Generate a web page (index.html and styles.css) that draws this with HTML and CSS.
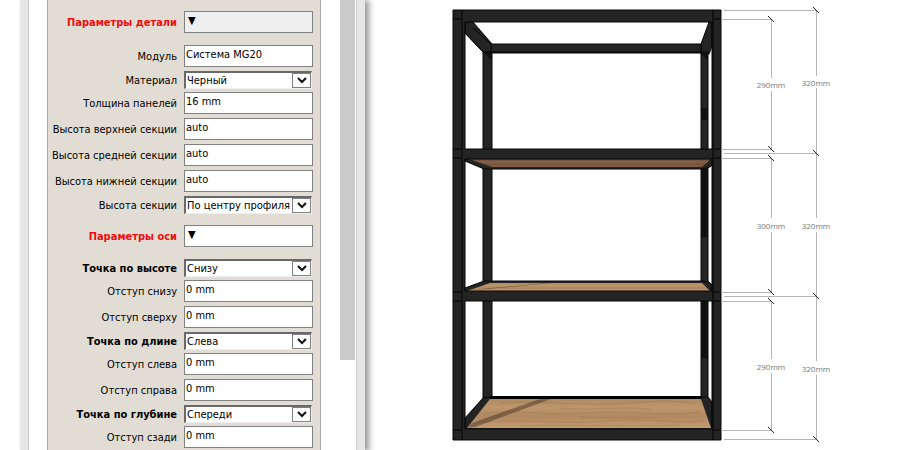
FILE: index.html
```html
<!DOCTYPE html>
<html lang="ru">
<head>
  <meta charset="UTF-8">
  <title>Система MG20</title>
  <link rel="stylesheet" href="styles.css">
</head>
<body>

  <aside class="sidebar">
    <form class="panel">
      <div class="row heading first">
        <label for="detail">Параметры детали</label>
        <button type="button" id="detail" class="toggle active">▼</button>
      </div>
      <div class="row">
        <label for="module">Модуль</label>
        <input type="text" id="module" value="Система MG20">
      </div>
      <div class="row">
        <label for="material">Материал</label>
        <div class="select">
          <select id="material"><option>Черный</option></select>
          <svg viewBox="0 0 17 13"><path d="M5 4l4 4 4-4"/></svg>
        </div>
      </div>
      <div class="row">
        <label for="thickness">Толщина панелей</label>
        <input type="text" id="thickness" value="16 mm">
      </div>
      <div class="row">
        <label for="topHeight">Высота верхней секции</label>
        <input type="text" id="topHeight" value="auto">
      </div>
      <div class="row">
        <label for="midHeight">Высота средней секции</label>
        <input type="text" id="midHeight" value="auto">
      </div>
      <div class="row">
        <label for="lowHeight">Высота нижней секции</label>
        <input type="text" id="lowHeight" value="auto">
      </div>
      <div class="row">
        <label for="section">Высота секции</label>
        <div class="select">
          <select id="section"><option>По центру профиля</option></select>
          <svg viewBox="0 0 17 13"><path d="M5 4l4 4 4-4"/></svg>
        </div>
      </div>

      <div class="row heading">
        <label for="axis">Параметры оси</label>
        <button type="button" id="axis" class="toggle">▼</button>
      </div>
      <div class="row bold">
        <label for="pointY">Точка по высоте</label>
        <div class="select">
          <select id="pointY"><option>Снизу</option></select>
          <svg viewBox="0 0 17 13"><path d="M5 4l4 4 4-4"/></svg>
        </div>
      </div>
      <div class="row">
        <label for="offBottom">Отступ снизу</label>
        <input type="text" id="offBottom" value="0 mm">
      </div>
      <div class="row">
        <label for="offTop">Отступ сверху</label>
        <input type="text" id="offTop" value="0 mm">
      </div>
      <div class="row bold">
        <label for="pointX">Точка по длине</label>
        <div class="select">
          <select id="pointX"><option>Слева</option></select>
          <svg viewBox="0 0 17 13"><path d="M5 4l4 4 4-4"/></svg>
        </div>
      </div>
      <div class="row">
        <label for="offLeft">Отступ слева</label>
        <input type="text" id="offLeft" value="0 mm">
      </div>
      <div class="row">
        <label for="offRight">Отступ справа</label>
        <input type="text" id="offRight" value="0 mm">
      </div>
      <div class="row bold">
        <label for="pointZ">Точка по глубине</label>
        <div class="select">
          <select id="pointZ"><option>Спереди</option></select>
          <svg viewBox="0 0 17 13"><path d="M5 4l4 4 4-4"/></svg>
        </div>
      </div>
      <div class="row">
        <label for="offBack">Отступ сзади</label>
        <input type="text" id="offBack" value="0 mm">
      </div>
    </form>
    <div class="scroll"><div class="thumb"></div></div>
  </aside>

  <main class="view">
    <svg class="model" viewBox="440 0 400 450">
      <defs>
        <linearGradient id="under" x1="0" y1="0" x2="0" y2="1">
          <stop offset="0" stop-color="#67493a"/>
          <stop offset="0.4" stop-color="#86634b"/>
          <stop offset="0.6" stop-color="#735340"/>
          <stop offset="1" stop-color="#836046"/>
        </linearGradient>
        <linearGradient id="wood" x1="0" y1="0" x2="0" y2="1">
          <stop offset="0" stop-color="#b08a62"/>
          <stop offset="0.3" stop-color="#bd966c"/>
          <stop offset="0.6" stop-color="#b08861"/>
          <stop offset="1" stop-color="#c29b73"/>
        </linearGradient>
      </defs>

      <!-- back frame -->
      <g class="steel">
        <rect x="483" y="50" width="9" height="348"/>
        <rect x="701" y="50" width="7" height="348"/>
        <path d="M465 22h8l19 22v9h-8L465 33z"/>
        <path d="M709 22h3v24l-3 8h-8V44z"/>
        <rect x="491" y="44" width="210" height="9"/>
        <path d="M484 53l8 8V53zM701 53l7 8V53z" class="dark"/>
      </g>
      <path class="edge" d="M473 28l18 16M465 33l18 19M483 52h226"/>
      <g class="dark">
        <rect x="702" y="108" width="6" height="12"/>
        <rect x="702" y="169" width="6" height="68"/>
        <rect x="702" y="301" width="6" height="57"/>
      </g>

      <!-- upper shelf, seen from below -->
      <path class="steel" d="M465 158v3l19 8h218l8-2 3-3v-6z"/>
      <path fill="url(#under)" d="M469 159h242l-9 8H492z"/>

      <!-- middle shelf -->
      <path class="steel" d="M465 292v-4l19-7h218l7 1 3 3v7z"/>
      <path fill="url(#wood)" d="M490 283h212l8 8H467z"/>
      <path class="shadow" d="M468 290l78-7h6l-64 6z"/>

      <!-- lower shelf -->
      <path class="steel" d="M465 418l18-20 7-1h218l4 5v28h-247z"/>
      <path d="M490 396h212v3H490z"/>
      <path fill="url(#wood)" d="M490 399h211l10 29H467z"/>
      <path class="grain" d="M500 403c50-3 80 4 130 0s50 0 65 0M484 413c40-4 60 3 100 0s80 4 115-1M560 408c30 3 60-2 90 1M478 422c60-3 90 3 130-1s60 3 96 0M580 417c20 2 50-1 75 1M520 426c40-2 90 1 160-1"/>
      <path class="shadow" d="M467 428l5-5 68-24h11l-76 28z"/>

      <!-- front frame -->
      <g class="steel">
        <path d="M453 10h268v430H453zM465 22v127h247V22zM465 159v132h247V159zM465 301v128h247V301z" fill-rule="evenodd"/>
      </g>
      <path class="edge" d="M462 10v430M713 10v430M453 19h9M713 19h8M453 149h9M713 149h8M453 158h9M713 158h8M453 292h9M713 292h8M453 301h9M713 301h8M453 430h9M713 430h8"/>

      <!-- dimensions -->
      <path class="dim" d="M724 10.500h92M721 19.500h50M721 149.500h50M724 153.500h92M721 158.500h50M721 292.500h50M724 296.500h92M721 301.500h50M721 430.500h50M724 439.500h92"/>
      <path class="dim" d="M771.500 19v59M771.500 91v58M771.500 158v60M771.500 232v60M771.500 301v58M771.500 373v58M816.500 10v66M816.500 88v130M816.500 232v129M816.500 375v65"/>
      <path class="tick" d="M768 16l6 6M768 146l6 6M768 155l6 6M768 289l6 6M768 298l6 6M768 427l6 6M813 7l6 6M813 150l6 6M813 293l6 6M813 436l6 6"/>
      <g class="size">
        <text x="771" y="88">290mm</text>
        <text x="771" y="229">300mm</text>
        <text x="771" y="370">290mm</text>
        <text x="816" y="86">320mm</text>
        <text x="816" y="229">320mm</text>
        <text x="816" y="372">320mm</text>
      </g>
    </svg>
  </main>

</body>
</html>
```
FILE: styles.css
```css
* {
  box-sizing: border-box;
}

body {
  margin: 0;
  display: flex;
  min-height: 100vh;
  background: #fff;
  color: #000;
  font-family: "DejaVu Sans Condensed", "DejaVu Sans", sans-serif;
  font-size: 11px;
}

.sidebar {
  display: flex;
  flex: 0 0 auto;
  margin-left: 20px;
  padding-left: 19px;
  border-left: 8px solid #e6e6e6;
  border-right: 8px solid #e6e6e6;
  box-shadow: inset 1px 0 #ccc, inset -1px 0 #ccc, 4px 0 6px #999;
}

.panel {
  width: 274px;
  padding: 11px 7px 0 0;
  background: #e1ddd5;
  border-left: 1px solid #aaa;
  border-right: 1px solid #aaa;
}

.row {
  display: grid;
  grid-template-columns: 1fr 129px;
  column-gap: 7px;
  align-items: center;
  margin-bottom: 3px;
}

.row label {
  text-align: right;
  white-space: nowrap;
  padding-top: 1px;
  line-height: 14px;
}

.heading {
  margin: 11px 0;
}

.first {
  margin-top: 0;
}

.heading label,
.bold label {
  font-weight: bold;
}

.heading label {
  color: #f00d0d;
}

input,
.toggle {
  width: 129px;
  height: 22px;
  margin: 0 0 1px;
  padding: 0 1px 4px;
  border: 1px solid #808080;
  border-radius: 0;
  background: #fff;
  color: #000;
  font: inherit;
}

.toggle {
  padding-left: 3px;
  text-align: left;
}

.active {
  background: #efefef;
}

.select {
  position: relative;
  width: 128px;
  height: 18px;
}

select {
  appearance: none;
  display: block;
  width: 100%;
  height: 18px;
  padding: 0 20px 0 1px;
  border: 2px solid #696969;
  border-right-color: #eee;
  border-bottom-color: #eee;
  border-width: 2px 1px 1px 2px;
  border-radius: 0;
  background: #fff;
  color: #000;
  font: inherit;
}

.select svg {
  position: absolute;
  top: 2px;
  right: 1px;
  width: 19px;
  height: 15px;
  border: 1px solid #808080;
  background: #fff;
  pointer-events: none;
}

.select path {
  fill: none;
  stroke: #111;
  stroke-width: 2;
}

.scroll {
  width: 36px;
  padding-left: 19px;
}

.thumb {
  width: 15px;
  height: 80vh;
  background: #cacaca;
}

.view {
  flex: 1;
  padding-left: 75px;
}

.model {
  display: block;
  width: 100%;
  max-width: 400px;
}

.steel {
  fill: #242424;
  stroke: #050505;
}

.dark {
  fill: #101010;
  stroke: none;
}

.edge {
  fill: none;
  stroke: #000;
}

.shadow {
  fill: #4a3424;
  opacity: 0.5;
}

.grain {
  fill: none;
  stroke: #8c6745;
  opacity: 0.3;
}

.dim {
  fill: none;
  stroke: #b5b5b5;
}

.tick {
  stroke: #222;
}

.size text {
  fill: #777;
  font-family: "Open Sans", sans-serif;
  font-size: 8px;
  text-anchor: middle;
}
```
